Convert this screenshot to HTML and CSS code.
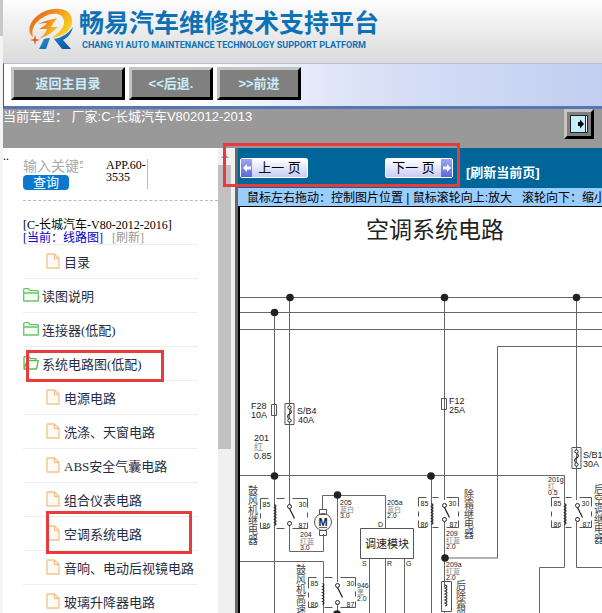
FILE: index.html
```
<!DOCTYPE html>
<html lang="zh-CN">
<head>
    <meta charset="UTF-8">
    <meta name="viewport" content="width=device-width, initial-scale=1.0">
    <title>畅易汽车维修技术支持平台</title>
    <link rel="stylesheet" href="styles.css">
</head>
<body>

<!-- shared icons -->
<svg class="defs" width="0" height="0" aria-hidden="true">
    <symbol id="file" viewBox="0 0 14 16">
        <path d="M1 1h7.500l4.500 4.500v9.500h-12zM8.500 1v4.500h4.500" fill="#fffaf3" stroke="#f5c28c" stroke-width="1.300" stroke-linejoin="round"/>
    </symbol>
    <symbol id="folder" viewBox="0 0 16 14">
        <path d="M.7 13V1.500q0-.8.8-.8h4l1.500 2h7.500q.8 0 .8.800V13zM.7 5h14.600" fill="#f6fff4" stroke="#6cc56a" stroke-width="1.300" stroke-linejoin="round"/>
    </symbol>
    <symbol id="folder-open" viewBox="0 0 16 14">
        <path d="M1 13V1.500q0-.8.8-.8h4l1.500 2h5.700v2M1 13l3-8.300h11.300L13.500 13z" fill="#f6fff4" stroke="#5cb85c" stroke-width="1.300" stroke-linejoin="round"/>
    </symbol>
</svg>

<header class="banner">
    <svg class="logo" viewBox="0 0 46 42" aria-hidden="true">
        <defs>
            <linearGradient id="fire" x1="0" y1="0" x2="1" y2=".6">
                <stop offset="0" stop-color="#e2561c"/>
                <stop offset=".45" stop-color="#f08a1c"/>
                <stop offset="1" stop-color="#fbd21e"/>
            </linearGradient>
            <linearGradient id="sea" x1="0" y1="0" x2="1" y2="1">
                <stop offset="0" stop-color="#2aa3e0"/>
                <stop offset="1" stop-color="#0b4da0"/>
            </linearGradient>
        </defs>
        <path d="M5 29C-3 23 3 10 15 4 28-2 43 0 44 12c1 9-7 16-20 18 7-5 13-11 12-17C35 4 23 4 14 10 6 15 3 22 5 29z" fill="url(#fire)"/>
        <path d="M10 16q9-4 19-6l-6 9h7q-6 7-19 12 6-4 8-10h-8q6-3 8-6-5 0-9 1z" fill="url(#fire)"/>
        <path d="M16 31q3-1 6-1l-4 11h-7zM26 31q12-2 19-12-2 9-10 13l8 9h-9z" fill="url(#sea)"/>
        <path d="M7 27l1 4 4 1-4 1-1 4-1-4-4-1 4-1z" fill="#e2561c"/>
    </svg>
    <div class="brand">
        <h1>畅易汽车维修技术支持平台</h1>
        <p>CHANG YI AUTO MAINTENANCE TECHNOLOGY SUPPORT PLATFORM</p>
    </div>
</header>

<nav class="toolbar">
    <button type="button" class="home">返回主目录</button>
    <button type="button">&lt;&lt;后退.</button>
    <button type="button">&gt;&gt;前进</button>
</nav>

<div class="model-bar">
    <span>当前车型： 厂家:C-长城汽车V802012-2013</span>
    <button type="button" class="toggle" aria-label="隐藏目录">
        <svg width="18" height="18" viewBox="0 0 18 18">
            <path d="M.5.5h17v17H.5z" fill="#c4f0fc" stroke="#222"/>
            <path d="M15 1h2v16h-2z" fill="#fff"/>
            <path d="M15.500 1v16" stroke="#222"/>
            <path d="M8 7h2V4.500l4 4.500-4 4.500V11H8z" fill="#000"/>
        </svg>
    </button>
</div>

<div class="frames">
    <aside class="sidebar">
        <span class="dots">..</span>
        <div class="side-content">
            <form class="search">
                <div class="search-box">
                    <input type="text" aria-label="输入关键字" placeholder="输入关键字">
                    <button type="button">查询</button>
                </div>
                <span class="version">APP.60-3535</span>
            </form>
            <div class="current">
                <div>[C-长城汽车-V80-2012-2016]</div>
                <a class="now" href="#">[当前：线路图]</a>
                <a class="refresh" href="#">[刷新]</a>
            </div>
            <ul class="tree">
                <li class="sub"><a href="#"><svg class="file"><use href="#file"/></svg>目录</a></li>
                <li><a href="#"><svg class="folder"><use href="#folder"/></svg>读图说明</a></li>
                <li><a href="#"><svg class="folder"><use href="#folder"/></svg>连接器(低配)</a></li>
                <li class="marked"><a href="#"><svg class="folder"><use href="#folder-open"/></svg>系统电路图(低配)</a></li>
                <li class="sub"><a href="#"><svg class="file"><use href="#file"/></svg>电源电路</a></li>
                <li class="sub"><a href="#"><svg class="file"><use href="#file"/></svg>洗涤、天窗电路</a></li>
                <li class="sub"><a href="#"><svg class="file"><use href="#file"/></svg>ABS安全气囊电路</a></li>
                <li class="sub"><a href="#"><svg class="file"><use href="#file"/></svg>组合仪表电路</a></li>
                <li class="sub marked"><a href="#"><svg class="file"><use href="#file"/></svg>空调系统电路</a></li>
                <li class="sub"><a href="#"><svg class="file"><use href="#file"/></svg>音响、电动后视镜电路</a></li>
                <li class="sub"><a href="#"><svg class="file"><use href="#file"/></svg>玻璃升降器电路</a></li>
            </ul>
        </div>
        <div class="scrollbar"><span class="arrow"></span><span class="thumb"></span></div>
    </aside>

    <main class="viewer">
        <div class="pager">
            <button type="button" class="prev"><i><svg width="8" height="8" viewBox="0 0 8 8"><path d="M0 4l4-4v2.500h4v3H4V8z" fill="#fff"/></svg></i><span>上一 页</span></button>
            <button type="button" class="next"><span>下一 页</span><i><svg width="8" height="8" viewBox="0 0 8 8"><path d="M8 4L4 0v2.500H0v3h4V8z" fill="#fff"/></svg></i></button>
            <a href="#">[刷新当前页]</a>
            <span class="mark"></span>
        </div>
        <div class="hint">鼠标左右拖动：控制图片位置 | 鼠标滚轮向上:放大 &nbsp; 滚轮向下：缩小</div>
        <div class="canvas">
            <svg class="diagram" width="720" height="480" viewBox="240 207 720 480">
                <defs>
                    <g id="fuse">
                        <path class="box" d="M-4.500 0h9v21h-9z"/>
                        <circle class="pin" cy="4" r="1.700"/>
                        <circle class="pin" cy="17" r="1.700"/>
                        <path class="coil" d="M1 6q2 3-1 4.500t-1 4.500"/>
                    </g>
                    <g id="relay">
                        <path class="dash" d="M0 11V0h8M16 0h8M32 0h15v9M0 15v5M47 14v5M0 24v6h8M16 30h8M32 30h15v-6"/>
                        <path class="coil" d="M14 6q3 1.500 0 3 3 1.500 0 3 3 1.500 0 3 3 1.500 0 3 3 1.500 0 3 3 1.500 0 3 3 1.500 0 3"/>
                        <path class="coil" d="M29 10l5 10"/>
                        <circle class="pin" cx="29" cy="8" r="2"/>
                        <circle class="pin" cx="29" cy="25" r="2"/>
                        <text x="2" y="8">85</text><text x="38" y="8">30</text>
                        <text x="2" y="29">86</text><text x="38" y="29">87</text>
                    </g>
                    <g id="relay-narrow">
                        <path class="dash" d="M0 9V0h8M14 0h6M28 0h12v9M0 14v5M40 14v5M0 23v7h8M14 30h6M28 30h12v-7"/>
                        <path class="coil" d="M13 6q3 1.500 0 3 3 1.500 0 3 3 1.500 0 3 3 1.500 0 3 3 1.500 0 3 3 1.500 0 3 3 1.500 0 3"/>
                        <path class="coil" d="M26 10l5 10"/>
                        <circle class="pin" cx="26" cy="8" r="2"/>
                        <circle class="pin" cx="26" cy="22" r="2"/>
                        <text x="2" y="8">85</text><text x="30" y="8">30</text>
                        <text x="2" y="29">86</text><text x="31" y="29">87</text>
                    </g>
                </defs>

                <text class="title" x="366" y="238">空调系统电路</text>

                <!-- bus lines -->
                <path class="wire" d="M240 297.500h720M240 312.500h720M240 329.500h720M960 346.500H497.500V558H445M240 475.500h324.500V567.500H539.500V690"/>
                <path class="wire" d="M274.500 312v378M289.500 297v209M444.500 297v203M444.500 522v65M431.500 475v215M576.500 297v203M576.500 522v45.500H640"/>

                <!-- blower -->
                <path class="wire" d="M289.500 525v26.500h34V534M322.500 510V495.500h63V529M337.500 495v87M240 561.500h83.500V690M337.500 604v86"/>
                <path class="box" d="M319.500 509.500h7v5h-7zM319.500 530.500h7v5h-7z"/>
                <circle class="box" cx="323" cy="522" r="8.500"/>
                <text class="motor" x="323" y="526">M</text>
                <path class="wire" d="M319 527.500h8"/>

                <!-- speed module -->
                <path class="box" d="M360.500 528.500h53v30h-53z"/>
                <text class="module" x="387" y="548">调速模块</text>
                <path class="wire" d="M369.500 559v131M385.500 559v131M404.500 559v131"/>
                <text x="378" y="527">D</text><text x="362" y="566">S</text><text x="387" y="566">R</text><text x="406" y="566">G</text>

                <!-- fuses -->
                <path class="box" d="M271.500 404.500h5v11h-5zM441.500 398.500h5v11h-5z"/>
                <use href="#fuse" x="289.500" y="403.500"/>
                <use href="#fuse" x="576.500" y="447.500"/>

                <!-- relays -->
                <use href="#relay" x="260.500" y="498.500"/>
                <use href="#relay" x="308.500" y="577.500"/>
                <use href="#relay-narrow" x="418.500" y="497.500"/>
                <use href="#relay-narrow" x="551.500" y="497.500"/>

                <!-- rear defroster -->
                <path class="box" d="M441.500 581.500h10v30h-10z"/>
                <path class="coil" d="M445 585q4 1.500 0 3 4 1.500 0 3 4 1.500 0 3 4 1.500 0 3 4 1.500 0 3 4 1.500 0 3 4 1.500 0 3"/>
                <path class="wire" d="M444.500 611v79"/>

                <!-- joints -->
                <circle cx="290" cy="297.500" r="3.800"/><circle cx="444.500" cy="297.500" r="3.800"/><circle cx="576.500" cy="297.500" r="3.800"/>
                <circle cx="274.500" cy="312.500" r="3.800"/><circle cx="274.500" cy="476" r="3.800"/><circle cx="431" cy="476" r="3.800"/>
                <circle cx="337.500" cy="495" r="3.800"/><circle cx="445" cy="558" r="3.800"/><circle cx="337" cy="614" r="3.800"/>

                <g class="label">
                    <text x="251" y="409">F28</text><text x="251" y="418">10A</text>
                    <text x="297" y="414">S/B4</text><text x="298" y="423">40A</text>
                    <text x="449" y="404">F12</text><text x="449" y="413">25A</text>
                    <text x="583" y="458">S/B1</text><text x="583" y="467">30A</text>
                    <text x="254" y="441">201</text><text class="colour" x="254" y="450">红</text><text x="254" y="459">0.85</text>
                </g>
                <text x="300" y="537">204</text><text class="colour" x="300" y="544">红蓝</text><text x="300" y="550">3.0</text>
                <text x="340" y="505">205</text><text class="colour" x="340" y="512">蓝白</text><text x="340" y="518">3.0</text>
                <text x="387" y="505">205a</text><text class="colour" x="387" y="512">蓝白</text><text x="387" y="518">2.0</text>
                <text x="357" y="588">946</text><text class="colour" x="357" y="595">黑</text><text x="357" y="601">2.0</text>
                <text x="446" y="536">209</text><text class="colour" x="446" y="543">红蓝</text><text x="446" y="549">2.0</text>
                <text x="446" y="567">209a</text><text class="colour" x="446" y="574">红蓝</text><text x="446" y="580">2.0</text>
                <text x="548" y="482">201g</text><text class="colour" x="548" y="489">红</text><text x="548" y="495">0.5</text>

                <g class="vertical">
                    <text x="252" y="485">鼓风机继电器</text>
                    <text x="300" y="564">鼓风机高速</text>
                    <text x="468" y="489">除霜继电器</text>
                    <text x="598" y="484">后空调继电器</text>
                    <text x="460" y="580">后除霜器</text>
                </g>
            </svg>
        </div>
    </main>
</div>

</body>
</html>
```

FILE: styles.css
```
* {
    box-sizing: border-box;
}
body {
    display: flex;
    flex-direction: column;
    height: 100vh;
    margin: 0;
    padding-left: 3px;
    overflow: hidden;
    background: linear-gradient(#c8c8c8 36px, #f4f4f4 36px);
    font-family: "Liberation Sans", "Noto Sans CJK SC", sans-serif;
    font-size: 13px;
}
button {
    padding: 0;
    font-family: inherit;
    cursor: pointer;
}
a {
    text-decoration: none;
}
.defs {
    position: absolute;
}

/* header */
.banner {
    display: flex;
    flex: none;
    height: 63px;
    padding: 8px 0 0 25px;
    background: linear-gradient(#fdfdfd, #dadada);
}
.logo {
    width: 46px;
    height: 42px;
}
.brand {
    padding-left: 5px;
    color: #0d72b5;
    white-space: nowrap;
}
.brand h1 {
    margin: 0;
    font-size: 25px;
    line-height: 30px;
}
.brand p {
    margin: 0 0 0 3px;
    font-family: Roboto, sans-serif;
    font-size: 9px;
    font-weight: bold;
    line-height: 14px;
}
.toolbar {
    display: flex;
    flex: none;
    gap: 4px;
    height: 46px;
    padding: 3px 7px;
    border-top: 1px solid #b4c0dc;
    border-bottom: 3px solid #5a75b5;
    border-left: 1px solid #555;
    background: linear-gradient(to right, #fff 30%, #dae2f7 60%, #c2cef0);
}
.toolbar button {
    width: 84px;
    height: 33px;
    border: 3px solid;
    border-color: #c4c4c4 #000 #000 #c4c4c4;
    background: #808080;
    color: #c8ecfa;
    font-size: 13px;
    font-weight: bold;
    line-height: 24px;
}
.toolbar .home {
    width: 114px;
}
.model-bar {
    display: flex;
    flex: none;
    justify-content: space-between;
    height: 39px;
    padding-right: 8px;
    background: #999;
    color: #fff;
    line-height: 15px;
}
.toggle {
    display: flex;
    align-items: center;
    justify-content: center;
    width: 30px;
    height: 30px;
    border: 3px solid;
    border-color: #c4c4c4 #000 #000 #c4c4c4;
    background: #808080;
}

/* left frame */
.frames {
    display: flex;
    flex: 1;
    min-height: 0;
}
.sidebar {
    display: flex;
    flex: none;
    width: 232px;
    background: #fff;
    font-family: "Liberation Serif", "Noto Sans CJK SC", serif;
}
.dots {
    width: 20px;
    font-size: 12px;
    line-height: 16px;
}
.side-content {
    flex: 1;
    min-width: 0;
    overflow: hidden;
}
.search {
    display: flex;
    gap: 23px;
    height: 53px;
    padding-top: 11px;
    border-bottom: 1px dashed #bbb;
}
.search-box {
    display: flex;
    flex-direction: column;
    width: 60px;
}
.search-box input {
    width: 60px;
    height: 16px;
    padding: 0;
    border: 0;
    background: none;
    font-family: inherit;
    font-size: 14px;
}
.search-box input::placeholder {
    color: #aaa;
}
.search-box button {
    width: 46px;
    height: 15px;
    border: 0;
    border-radius: 4px;
    background: #0a78d0;
    color: #fff;
    font-size: 13px;
    line-height: 15px;
}
.version {
    width: 42px;
    height: 30px;
    border-right: 1px solid #bbb;
    font-size: 12px;
    line-height: 12px;
}
.current {
    width: 175px;
    height: 44px;
    padding-top: 18px;
    border-bottom: 1px solid #eee;
    font-size: 12px;
    line-height: 13px;
    white-space: nowrap;
}
.now {
    margin-right: 6px;
    color: #00c;
}
.refresh {
    color: #999;
}
.tree {
    width: 175px;
    margin: 0;
    padding: 0;
    list-style: none;
}
.tree li {
    position: relative;
    height: 34px;
    border-bottom: 1px solid #eee;
}
.tree a {
    display: flex;
    gap: 3px;
    align-items: center;
    height: 32px;
    color: #1f2d44;
    white-space: nowrap;
}
.tree .sub a {
    gap: 4px;
    padding-left: 23px;
}
.file {
    width: 14px;
    height: 16px;
}
.folder {
    width: 16px;
    height: 14px;
}
/* red frames round the picked entries */
.marked::after {
    content: "";
    position: absolute;
    inset: 3px 34px -2px 3px;
    border: 3px solid #e83c3c;
}
.sub.marked::after {
    inset: -6px 6px -4px 23px;
}
.scrollbar {
    display: flex;
    flex: none;
    flex-direction: column;
    align-items: center;
    width: 17px;
    padding-right: 4px;
    background: #f0f0f0;
}
.arrow {
    margin: 6px 0 7px;
    border: 4px solid transparent;
    border-top: 0;
    border-bottom-color: #a0a0a0;
}
.thumb {
    width: 13px;
    height: 61%;
    background: #c1c1c1;
}

/* right frame */
.viewer {
    display: flex;
    flex: 1;
    flex-direction: column;
    min-width: 0;
    border-left: 3px solid #666;
    box-shadow: inset 2px 0 #000;
}
.pager {
    position: relative;
    display: flex;
    flex: none;
    height: 40px;
    padding: 10px 0 0 2px;
    background: #069;
}
.pager button {
    display: flex;
    width: 68px;
    height: 20px;
    border: 1px solid #fff;
    border-radius: 2px;
    background: linear-gradient(#fff, #c8ccf4);
    color: #000;
    font-size: 13px;
    line-height: 18px;
}
.pager button span {
    flex: 1;
    white-space: nowrap;
}
.pager i {
    display: flex;
    align-items: center;
    justify-content: center;
    width: 11px;
    height: 18px;
    background: linear-gradient(#a0a8f0, #5a68d8);
}
.pager .next {
    margin: 0 13px 0 77px;
}
.pager a {
    padding-top: 6px;
    color: #fff;
    font-weight: bold;
    line-height: 18px;
}
.mark {
    position: absolute;
    top: -5px;
    left: -15px;
    width: 237px;
    height: 44px;
    border: 3px solid #e83c3c;
}
.hint {
    flex: none;
    height: 19px;
    padding-left: 9px;
    border-bottom: 1px solid #000;
    overflow: hidden;
    background: #9cf;
    font-size: 12px;
    line-height: 20px;
    white-space: nowrap;
}
.canvas {
    flex: 1;
    min-height: 0;
    margin-left: 2px;
    overflow: hidden;
    background: #fff;
}

/* wiring diagram */
.diagram {
    display: block;
    font-size: 7px;
    fill: #222;
}
.wire {
    fill: none;
    stroke: #666;
}
.box {
    fill: none;
    stroke: #555;
}
.dash {
    fill: none;
    stroke: #555;
}
.coil {
    fill: none;
    stroke: #222;
    stroke-width: 1.2;
}
.pin {
    fill: #fff;
    stroke: #222;
}
.title {
    font-size: 23px;
}
.label {
    font-size: 9px;
}
.colour {
    fill: #888;
}
.motor {
    font-size: 11px;
    font-weight: bold;
    text-anchor: middle;
}
.module {
    font-size: 11px;
    text-anchor: middle;
}
.vertical {
    font-size: 10px;
    fill: #444;
    writing-mode: vertical-rl;
}
```
